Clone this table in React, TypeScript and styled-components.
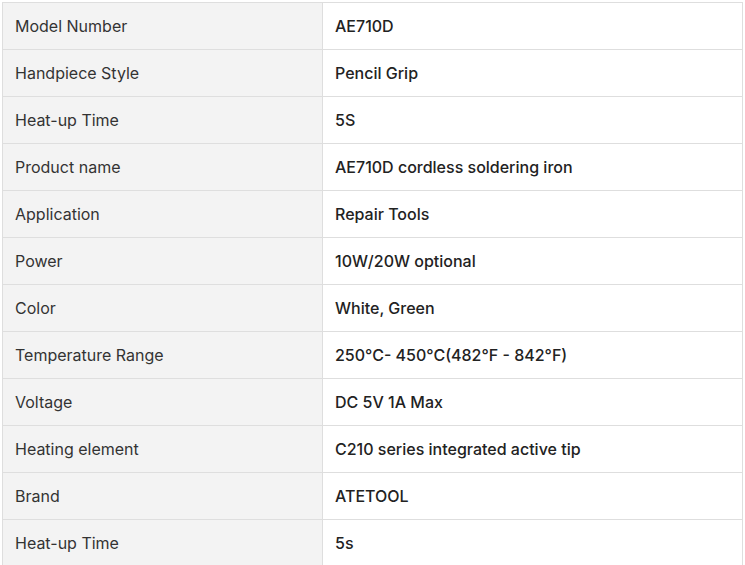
import React from "react";
import styled, { createGlobalStyle } from "styled-components";

const Global = createGlobalStyle`
  html, body { margin: 0; padding: 0; background: #fff; }
  body { font-family: Inter, "Noto Sans", sans-serif; }
`;

const Wrap = styled.div`
  padding: 2px 0 0 2px;
`;

const Table = styled.table`
  width: 741px;
  border-collapse: collapse;
  table-layout: fixed;
  font-size: 16px;
`;

const Row = styled.tr`
  height: 47px;
`;

const Label = styled.td`
  width: 320px;
  box-sizing: border-box;
  background: #f3f3f3;
  border: 1px solid #dedede;
  padding: 0 12px;
  color: #333;
  font-weight: 400;
  vertical-align: middle;
`;

const Value = styled.td`
  border: 1px solid #dedede;
  padding: 0 12px;
  color: #222;
  font-weight: 500;
  vertical-align: middle;
`;

const rows: [string, string][] = [
  ["Model Number", "AE710D"],
  ["Handpiece Style", "Pencil Grip"],
  ["Heat-up Time", "5S"],
  ["Product name", "AE710D cordless soldering iron"],
  ["Application", "Repair Tools"],
  ["Power", "10W/20W optional"],
  ["Color", "White, Green"],
  ["Temperature Range", "250°C- 450°C(482°F - 842°F)"],
  ["Voltage", "DC 5V 1A Max"],
  ["Heating element", "C210 series integrated active tip"],
  ["Brand", "ATETOOL"],
  ["Heat-up Time", "5s"],
];

export default function App() {
  return (
    <Wrap>
      <Global />
      <Table>
        <tbody>
          {rows.map(([k, v], i) => (
            <Row key={i}>
              <Label>{k}</Label>
              <Value>{v}</Value>
            </Row>
          ))}
        </tbody>
      </Table>
    </Wrap>
  );
}
